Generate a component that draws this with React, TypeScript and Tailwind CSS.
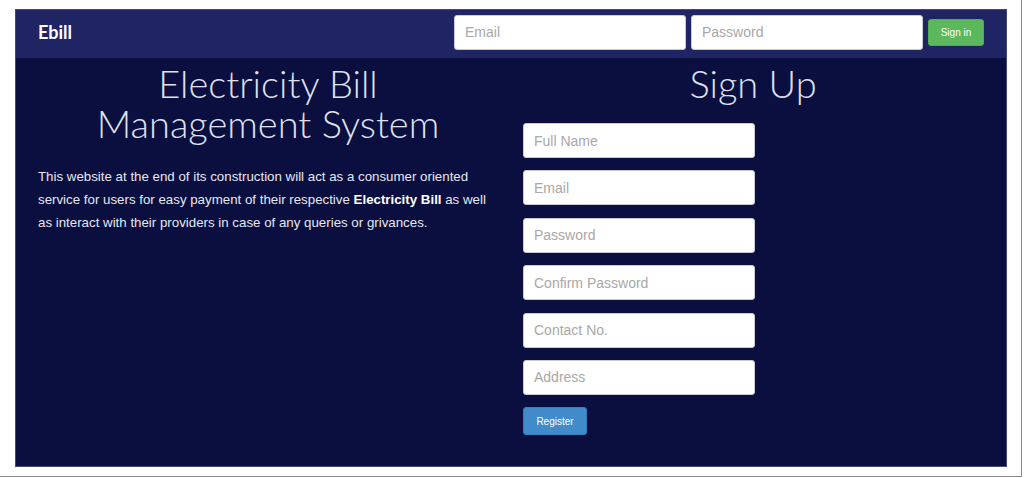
import React from 'react';

const inputCls =
  'block w-[232px] h-[35px] rounded-[3px] border border-[#c8cbd6] bg-white px-[10px] text-[14px] text-[#555] placeholder:text-[#a8a8a8] outline-none';

const signUpFields = ['Full Name', 'Email', 'Password', 'Confirm Password', 'Contact No.', 'Address'];

export default function App() {
  return (
    <div
      className="w-[1024px] h-[478px] bg-white"
      style={{ fontFamily: '"Liberation Sans", Arial, sans-serif' }}
    >
      <div className="w-[1022px] h-[477px] border-r border-b border-[#8a8a8a] pl-[15px] pt-[9px]">
        <div className="w-[992px] h-[458px] bg-[#0b0f3f] border border-[#9aa0c8]/40 flex flex-col">
          {/* Navbar */}
          <nav className="h-[48px] bg-[#1f2563] flex items-center pl-[22px] pr-[22px] pb-[4px]">
            <span
              className="text-white text-[18px] font-bold"
              style={{ fontFamily: 'Lato, "Liberation Sans", sans-serif' }}
            >
              Ebill
            </span>
            <div className="ml-auto flex items-center gap-[5px]">
              <input className={`${inputCls} w-[232px] h-[34px]`} placeholder="Email" />
              <input className={`${inputCls} w-[231px] h-[34px]`} placeholder="Password" />
              <button className="w-[56px] h-[27px] rounded-[3px] bg-[#5cb85c] text-white text-[10px] border border-[#4cae4c]">
                Sign in
              </button>
            </div>
          </nav>

          {/* Body */}
          <div className="flex pt-[5px]">
            {/* Left column */}
            <div className="w-[460px] ml-[22px]">
              <h1
                className="text-center text-[38px] leading-[40px] font-light text-[#dfe1ec]"
                style={{ fontFamily: 'Lato, "Liberation Sans", sans-serif' }}
              >
                Electricity Bill
                <br />
                Management System
              </h1>
              <p className="mt-[22px] text-[13.3px] leading-[23px] text-[#e6e7ef]">
                <span className="block whitespace-nowrap">
                  This website at the end of its construction will act as a consumer oriented
                </span>
                <span className="block whitespace-nowrap">
                  service for users for easy payment of their respective{' '}
                  <b className="font-bold text-white">Electricity Bill</b> as well
                </span>
                <span className="block whitespace-nowrap">
                  as interact with their providers in case of any queries or grivances.
                </span>
              </p>
            </div>

            {/* Right column */}
            <div className="w-[460px] ml-[25px]">
              <h2
                className="text-center text-[38px] leading-[40px] font-light text-[#dfe1ec]"
                style={{ fontFamily: 'Lato, "Liberation Sans", sans-serif' }}
              >
                Sign Up
              </h2>
              <form className="mt-[20px] flex flex-col gap-[12.4px]">
                {signUpFields.map((f) => (
                  <input key={f} className={inputCls} placeholder={f} />
                ))}
                <button
                  type="button"
                  className="w-[64px] h-[28px] rounded-[3px] bg-[#428bca] border border-[#357ebd] text-white text-[10px]"
                >
                  Register
                </button>
              </form>
            </div>
          </div>
        </div>
      </div>
    </div>
  );
}
